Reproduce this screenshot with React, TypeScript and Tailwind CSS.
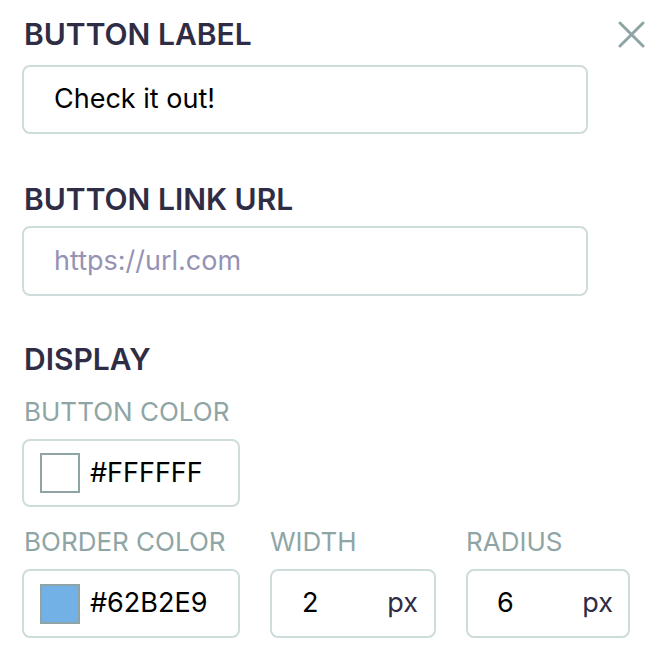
import React from "react";

const font = { fontFamily: "Inter, 'Noto Sans', sans-serif" };

export default function App() {
  return (
    <div className="w-[664px] h-[662px] bg-white relative" style={font}>
      <button className="absolute left-[617px] top-[20px] w-[29px] h-[29px] flex items-center justify-center">
        <svg width="27" height="27" viewBox="0 0 27 27" fill="none" stroke="#8fa5a5" strokeWidth="3" strokeLinecap="round">
          <path d="M2 2 L25 25 M25 2 L2 25" />
        </svg>
      </button>
      <div className="pl-[22px] pt-[17px] flex flex-col">
        <h2 className="h-[34px] text-[30px] leading-[34px] font-semibold text-[#2f2d45] pl-[2px]">BUTTON LABEL</h2>
        <div className="mt-[14px] w-[566px] h-[69px] border-2 border-[#cfdcdc] rounded-[8px] flex items-center pl-[30px] text-[27px] text-black">
          Check it out!
        </div>
        <h2 className="mt-[48px] h-[34px] text-[30px] leading-[34px] font-semibold text-[#2f2d45] pl-[2px]">BUTTON LINK URL</h2>
        <div className="mt-[10px] w-[566px] h-[70px] border-2 border-[#cfdcdc] rounded-[8px] flex items-center pl-[30px] text-[27px] text-[#9593b4]">
          https://url.com
        </div>
        <h2 className="mt-[46px] h-[34px] text-[30px] leading-[34px] font-semibold text-[#2f2d45] pl-[2px]">DISPLAY</h2>
        <div className="mt-[21px] h-[30px] text-[26px] leading-[30px] text-[#8fa5a5] pl-[2px]">BUTTON COLOR</div>
        <div className="mt-[12px] w-[218px] h-[68px] border-2 border-[#cfdcdc] rounded-[8px] flex items-center pl-[16px] gap-[10px] text-[27px] text-black">
          <span className="w-[40px] h-[40px] border-2 border-[#8fa5a5] bg-white" />
          #FFFFFF
        </div>
        <div className="mt-[20px] flex gap-[30px]">
          <div className="flex flex-col">
            <div className="h-[30px] text-[26px] leading-[30px] text-[#8fa5a5] pl-[2px]">BORDER COLOR</div>
            <div className="mt-[12px] w-[218px] h-[69px] border-2 border-[#cfdcdc] rounded-[8px] flex items-center pl-[16px] gap-[10px] text-[27px] text-black">
              <span className="w-[40px] h-[40px] border-2 border-[#8fa5a5] bg-[#72b1e6]" />
              #62B2E9
            </div>
          </div>
          <div className="flex flex-col">
            <div className="h-[30px] text-[26px] leading-[30px] text-[#8fa5a5]">WIDTH</div>
            <div className="mt-[12px] w-[166px] h-[69px] border-2 border-[#cfdcdc] rounded-[8px] flex items-center justify-between pl-[30px] pr-[16px] text-[27px]">
              <span className="text-black">2</span>
              <span className="text-[#2f2d45]">px</span>
            </div>
          </div>
          <div className="flex flex-col">
            <div className="h-[30px] text-[26px] leading-[30px] text-[#8fa5a5]">RADIUS</div>
            <div className="mt-[12px] w-[164px] h-[69px] border-2 border-[#cfdcdc] rounded-[8px] flex items-center justify-between pl-[29px] pr-[15px] text-[27px]">
              <span className="text-black">6</span>
              <span className="text-[#2f2d45]">px</span>
            </div>
          </div>
        </div>
      </div>
    </div>
  );
}
